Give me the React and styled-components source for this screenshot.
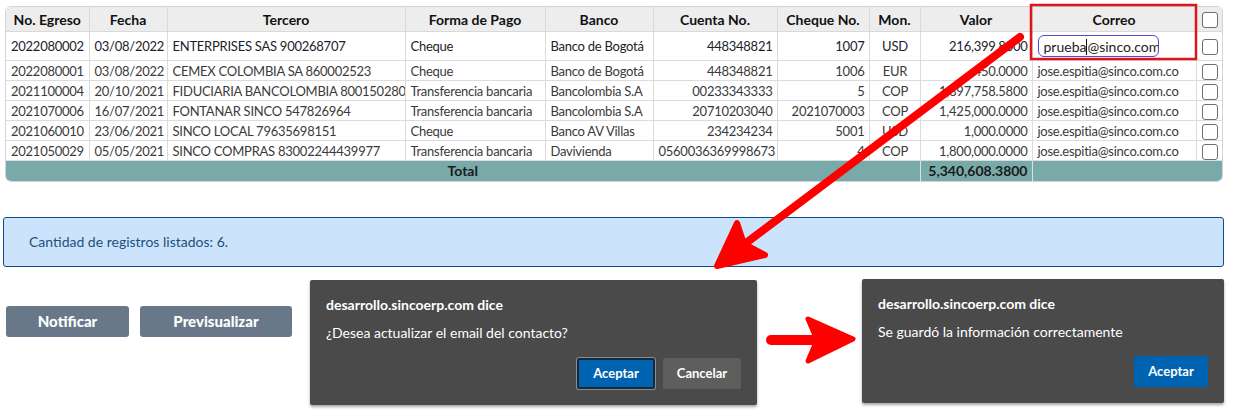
import styled, { createGlobalStyle } from 'styled-components';

const GlobalStyle = createGlobalStyle`
  body {
    margin: 0;
    background: #fff;
    font-family: Lato, "Liberation Sans", sans-serif;
  }
`;

const columns = [
  { title: 'No. Egreso', width: 83, align: 'left' },
  { title: 'Fecha', width: 78, align: 'left' },
  { title: 'Tercero', width: 238, align: 'left' },
  { title: 'Forma de Pago', width: 140, align: 'left' },
  { title: 'Banco', width: 108, align: 'left' },
  { title: 'Cuenta No.', width: 124, align: 'right' },
  { title: 'Cheque No.', width: 92, align: 'right' },
  { title: 'Mon.', width: 51, align: 'center' },
  { title: 'Valor', width: 112, align: 'right' },
  { title: 'Correo', width: 164, align: 'left' },
];

const rows = [
  ['2022080002', '03/08/2022', 'ENTERPRISES SAS 900268707', 'Cheque', 'Banco de Bogotá', '448348821', '1007', 'USD', '216,399.8000', null],
  ['2022080001', '03/08/2022', 'CEMEX COLOMBIA SA 860002523', 'Cheque', 'Banco de Bogotá', '448348821', '1006', 'EUR', '450.0000', 'jose.espitia@sinco.com.co'],
  ['2021100004', '20/10/2021', 'FIDUCIARIA BANCOLOMBIA 800150280', 'Transferencia bancaria', 'Bancolombia S.A', '00233343333', '5', 'COP', '1,897,758.5800', 'jose.espitia@sinco.com.co'],
  ['2021070006', '16/07/2021', 'FONTANAR SINCO 547826964', 'Transferencia bancaria', 'Bancolombia S.A', '20710203040', '2021070003', 'COP', '1,425,000.0000', 'jose.espitia@sinco.com.co'],
  ['2021060010', '23/06/2021', 'SINCO LOCAL 79635698151', 'Cheque', 'Banco AV Villas', '234234234', '5001', 'USD', '1,000.0000', 'jose.espitia@sinco.com.co'],
  ['2021050029', '05/05/2021', 'SINCO COMPRAS 83002244439977', 'Transferencia bancaria', 'Davivienda', '0560036369998673', '4', 'COP', '1,800,000.0000', 'jose.espitia@sinco.com.co'],
];

const App = () => {
  return (
    <Page>
      <GlobalStyle />
      <TableWrap>
        <Table>
          <colgroup>
            {columns.map((c) => (
              <col key={c.title} style={{ width: c.width }} />
            ))}
            <col style={{ width: 28 }} />
          </colgroup>
          <thead>
            <tr>
              {columns.map((c) => (
                <Th key={c.title}>{c.title}</Th>
              ))}
              <Th>
                <Check />
              </Th>
            </tr>
          </thead>
          <tbody>
            {rows.map((r, i) => (
              <Row key={r[0]} $editing={i === 0}>
                {r.map((v, j) => (
                  <Td key={j} $align={columns[j].align} $strong={i === 0}>
                    {v === null ? (
                      <EmailField>
                        prueba<Caret />@sinco.com
                      </EmailField>
                    ) : (
                      v
                    )}
                  </Td>
                ))}
                <Td $align='center'>
                  <Check />
                </Td>
              </Row>
            ))}
            <TotalRow>
              <TotalCell colSpan={8} $align='center'>Total</TotalCell>
              <TotalCell $align='right'>5,340,608.3800</TotalCell>
              <TotalCell colSpan={2} />
            </TotalRow>
          </tbody>
        </Table>
      </TableWrap>

      <InfoBar>Cantidad de registros listados: 6.</InfoBar>

      <BottomRow>
        <Actions>
          <ActionButton $w={123}>Notificar</ActionButton>
          <ActionButton $w={152}>Previsualizar</ActionButton>
        </Actions>

        <Dialog $w={447} $h={125}>
          <DialogTitle>desarrollo.sincoerp.com dice</DialogTitle>
          <DialogText>¿Desea actualizar el email del contacto?</DialogText>
          <DialogButtons>
            <DialogButton $primary $focused>Aceptar</DialogButton>
            <DialogButton>Cancelar</DialogButton>
          </DialogButtons>
        </Dialog>

        <SideArrow width='105' height='125' viewBox='0 0 105 125'>
          <line x1='14' y1='60' x2='56' y2='60' stroke='#f00' strokeWidth='10' strokeLinecap='round' />
          <polygon points='51,39 96,59 51,81 60,60' fill='#f00' stroke='#f00' strokeWidth='5' strokeLinejoin='round' />
        </SideArrow>

        <Dialog $w={362} $h={124} $offset={-1}>
          <DialogTitle>desarrollo.sincoerp.com dice</DialogTitle>
          <DialogText>Se guardó la información correctamente</DialogText>
          <DialogButtons>
            <DialogButton $primary>Aceptar</DialogButton>
          </DialogButtons>
        </Dialog>
      </BottomRow>

      <Annotations width='1233' height='415' viewBox='0 0 1233 415'>
        <rect x='1031' y='5' width='165' height='54' fill='none' stroke='#e3131b' strokeWidth='2.5' />
        <line x1='1020' y1='37' x2='742' y2='246' stroke='#f00' strokeWidth='8' strokeLinecap='round' />
        <polygon points='717,266 737,223 744,244 765,255' fill='#f00' stroke='#f00' strokeWidth='6' strokeLinejoin='round' />
      </Annotations>
    </Page>
  );
};

const Page = styled.div`
  position: relative;
  width: 1233px;
  height: 415px;
  overflow: hidden;
  padding: 6px 0 0;
  box-sizing: border-box;
`;

const TableWrap = styled.div`
  margin-left: 5px;
  width: 1218px;
  border: 1px solid #d4d4d4;
  border-radius: 6px;
  overflow: hidden;
  box-sizing: border-box;
`;

const Table = styled.table`
  width: 100%;
  table-layout: fixed;
  border-collapse: collapse;
  font-size: 13px;
`;

const Th = styled.th`
  height: 24px;
  padding: 0 4px;
  background: #ededed;
  color: #111;
  font-size: 14px;
  font-weight: 700;
  text-align: center;
  border-right: 1px solid #d9d9d9;
  border-bottom: 1px solid #d9d9d9;
  white-space: nowrap;

  &:last-child {
    border-right: none;
  }
`;

const Row = styled.tr`
  height: ${({ $editing }) => ($editing ? '29px' : '20px')};
`;

const Td = styled.td`
  padding: 0 4px 0 5px;
  color: ${({ $strong }) => ($strong ? '#1c1c2c' : '#3a3a3a')};
  text-align: ${({ $align }) => $align || 'left'};
  letter-spacing: -0.25px;
  border-right: 1px solid #dcdcdc;
  border-bottom: 1px solid #dcdcdc;
  white-space: nowrap;
  overflow: hidden;
  line-height: 18px;

  &:last-child {
    border-right: none;
    padding: 0;
  }
`;

const TotalRow = styled.tr`
  height: 20px;
  background: #78aaa9;
`;

const TotalCell = styled.td`
  padding: 0 4px;
  font-size: 14px;
  font-weight: 700;
  color: #1a1a1a;
  text-align: ${({ $align }) => $align || 'left'};
  border-right: 1px solid #d6e3e2;

  &:last-child {
    border-right: none;
  }
`;

const EmailField = styled.div`
  width: 121px;
  height: 22px;
  margin-left: 0;
  padding: 0 0 0 5px;
  box-sizing: border-box;
  border: 1px solid #4b4bd6;
  border-radius: 6px;
  font-size: 14px;
  letter-spacing: 0;
  line-height: 21px;
  color: #222;
  overflow: hidden;
  white-space: nowrap;
`;

const Caret = styled.span`
  display: inline-block;
  width: 1px;
  height: 16px;
  margin-bottom: -3px;
  background: #111;
`;

const Check = styled.span`
  display: inline-block;
  width: 14px;
  height: 14px;
  vertical-align: middle;
  border: 1px solid #6f6f6f;
  border-radius: 3px;
  background: #fff;
`;

const InfoBar = styled.div`
  margin: 35px 9px 0 3px;
  height: 50px;
  padding-left: 25px;
  display: flex;
  align-items: center;
  box-sizing: border-box;
  background: #cce4fb;
  border: 1px solid #0f4c8a;
  border-radius: 3px;
  color: #1d4f7e;
  font-size: 14px;
`;

const BottomRow = styled.div`
  display: flex;
  align-items: flex-start;
  margin-top: 13px;
  padding-left: 6px;
`;

const Actions = styled.div`
  display: flex;
  gap: 11px;
  margin-top: 26px;
  margin-right: 18px;
`;

const ActionButton = styled.button`
  width: ${({ $w }) => $w}px;
  height: 31px;
  border: none;
  border-radius: 3px;
  background: #687889;
  color: #fff;
  font-family: Lato, sans-serif;
  font-size: 15px;
  font-weight: 900;
  cursor: pointer;
`;

const Dialog = styled.div`
  width: ${({ $w }) => $w}px;
  height: ${({ $h }) => $h}px;
  margin-top: ${({ $offset }) => $offset || 0}px;
  padding: 16px;
  box-sizing: border-box;
  display: flex;
  flex-direction: column;
  background: #4a4a4a;
  border-radius: 2px;
  box-shadow: 0 2px 3px rgba(0, 0, 0, 0.35);
  color: #fff;
  font-family: Lato, "Noto Sans", sans-serif;
`;

const DialogTitle = styled.div`
  font-size: 14px;
  font-weight: 700;
  line-height: 18px;
`;

const DialogText = styled.div`
  margin-top: 10px;
  font-size: 14px;
  line-height: 18px;
`;

const DialogButtons = styled.div`
  margin-top: auto;
  display: flex;
  justify-content: flex-end;
  gap: 8px;
`;

const DialogButton = styled.button`
  width: ${({ $focused, $primary }) => ($focused ? '78px' : $primary ? '74px' : '78px')};
  height: 31px;
  border: ${({ $focused }) => ($focused ? '2px solid #16293d' : 'none')};
  border-radius: 2px;
  box-shadow: ${({ $focused }) => ($focused ? '0 0 0 1px #8d8d8d' : 'none')};
  background: ${({ $primary }) => ($primary ? '#0063b1' : '#5e5e5e')};
  color: #fff;
  font-family: Lato, "Noto Sans", sans-serif;
  font-size: 13px;
  font-weight: 700;
`;

const SideArrow = styled.svg`
  flex: none;
  display: block;
`;

const Annotations = styled.svg`
  position: absolute;
  top: 0;
  left: 0;
  pointer-events: none;
`;

export default App;
